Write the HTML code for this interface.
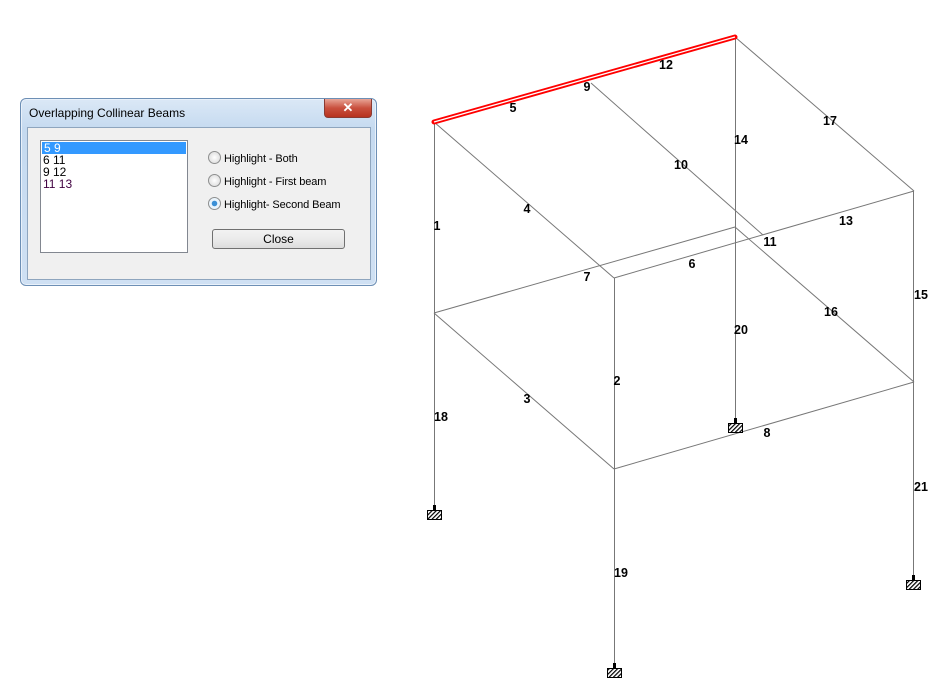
<!DOCTYPE html>
<html><head><meta charset="utf-8"><style>
body{margin:0;width:941px;height:688px;background:#fff;position:relative;overflow:hidden;font-family:"Liberation Sans",sans-serif}
.dlg{position:absolute;left:20px;top:98px;width:355px;height:186px;border:1px solid #6d8fb5;border-radius:6px;background:linear-gradient(#dbe8f6,#c5daf0 30px,#cfe0f3);box-shadow:0 0 0 1px #e9f1fa inset}
.title{position:absolute;left:8px;top:7px;font-size:12px;color:#000}
.x{position:absolute;left:303px;top:0;width:46px;height:18px;border:1px solid #8a3a32;border-top:none;border-radius:0 0 4px 4px;background:linear-gradient(#e8a597,#c9503e 50%,#b7321f);color:#fff;font-weight:bold;font-size:13px;text-align:center;line-height:17px}
.panel{position:absolute;left:6px;top:28px;width:342px;height:151px;background:#f0f0f0;border:1px solid #8ea5be}
.list{position:absolute;left:12px;top:12px;width:146px;height:111px;background:#fff;border:1px solid #828790;font-size:12px;line-height:12px}
.list div{padding-left:2px;height:12px}
.sel{background:#3399ff;color:#fff;margin:1px 1px 0}
.rad{position:absolute;left:180px;font-size:11px;letter-spacing:-0.1px;color:#000}
.rad i{display:inline-block;width:11px;height:11px;border:1px solid #8e8f8f;border-radius:50%;background:radial-gradient(#fff,#d6d6d6);vertical-align:-2px;margin-right:3px}
.rad i.on{background:radial-gradient(#3a8fd6 0 2.5px,#eaf4fc 3px)}
.btn{position:absolute;left:184px;top:101px;width:131px;height:18px;border:1px solid #707070;border-radius:3px;background:linear-gradient(#f2f2f2,#ebebeb 50%,#dcdcdc);font-size:12px;text-align:center;line-height:18px}
svg{position:absolute;left:0;top:0}
svg text{font-family:"Liberation Sans",sans-serif;font-weight:bold;font-size:12.5px;fill:#000}
</style></head><body>
<svg width="941" height="688">
<defs><pattern id="h" width="3" height="3" patternUnits="userSpaceOnUse" patternTransform="rotate(45)"><rect width="3" height="3" fill="#fff"/><rect width="1.2" height="3" fill="#000"/></pattern></defs>
<g stroke="#777" stroke-width="1" fill="none">
<line x1="434.5" y1="122" x2="434.5" y2="509"/>
<line x1="735.5" y1="37" x2="735.5" y2="422"/>
<line x1="913.5" y1="191" x2="913.5" y2="579"/>
<line x1="614.5" y1="278" x2="614.5" y2="667"/>
<line x1="434" y1="122" x2="614" y2="278"/>
<line x1="591" y1="83" x2="763" y2="235"/>
<line x1="735" y1="37" x2="914" y2="191"/>
<line x1="614" y1="278" x2="914" y2="191"/>
<line x1="434" y1="313" x2="735" y2="227"/>
<line x1="434" y1="313" x2="614" y2="469"/>
<line x1="735" y1="227" x2="914" y2="382"/>
<line x1="614" y1="469" x2="914" y2="382"/>
</g>
<line x1="434" y1="122" x2="735" y2="37" stroke="#f00" stroke-width="5" stroke-linecap="round"/>
<line x1="434" y1="122" x2="735" y2="37" stroke="#fff" stroke-width="1.3"/>
<g>
<rect x="433" y="505" width="3" height="5"/><rect x="427.5" y="510.5" width="14" height="9" fill="url(#h)" stroke="#000"/>
<rect x="734" y="418" width="3" height="5"/><rect x="728.5" y="423.5" width="14" height="9" fill="url(#h)" stroke="#000"/>
<rect x="912" y="575" width="3" height="5"/><rect x="906.5" y="580.5" width="14" height="9" fill="url(#h)" stroke="#000"/>
<rect x="613" y="663" width="3" height="5"/><rect x="607.5" y="668.5" width="14" height="9" fill="url(#h)" stroke="#000"/>
</g>
<g text-anchor="middle">
<text x="437" y="230">1</text><text x="527" y="213">4</text><text x="513" y="112">5</text>
<text x="587" y="91">9</text><text x="666" y="69">12</text><text x="741" y="144">14</text>
<text x="830" y="125">17</text><text x="681" y="169">10</text><text x="846" y="225">13</text>
<text x="770" y="246">11</text><text x="692" y="268">6</text><text x="587" y="281">7</text>
<text x="921" y="299">15</text><text x="831" y="316">16</text><text x="741" y="334">20</text>
<text x="617" y="385">2</text><text x="527" y="403">3</text><text x="441" y="421">18</text>
<text x="767" y="437">8</text><text x="921" y="491">21</text><text x="621" y="577">19</text>
</g>
</svg>
<div class="dlg">
<div class="title">Overlapping Collinear Beams</div>
<div class="x">✕</div>
<div class="panel">
<div class="list"><div class="sel">5 9</div><div>6 11</div><div>9 12</div><div style="color:#400040">11 13</div></div>
<div class="rad" style="top:23px"><i></i>Highlight - Both</div>
<div class="rad" style="top:46px"><i></i>Highlight - First beam</div>
<div class="rad" style="top:69px"><i class="on"></i>Highlight- Second Beam</div>
<div class="btn">Close</div>
</div>
</div>
</body></html>
